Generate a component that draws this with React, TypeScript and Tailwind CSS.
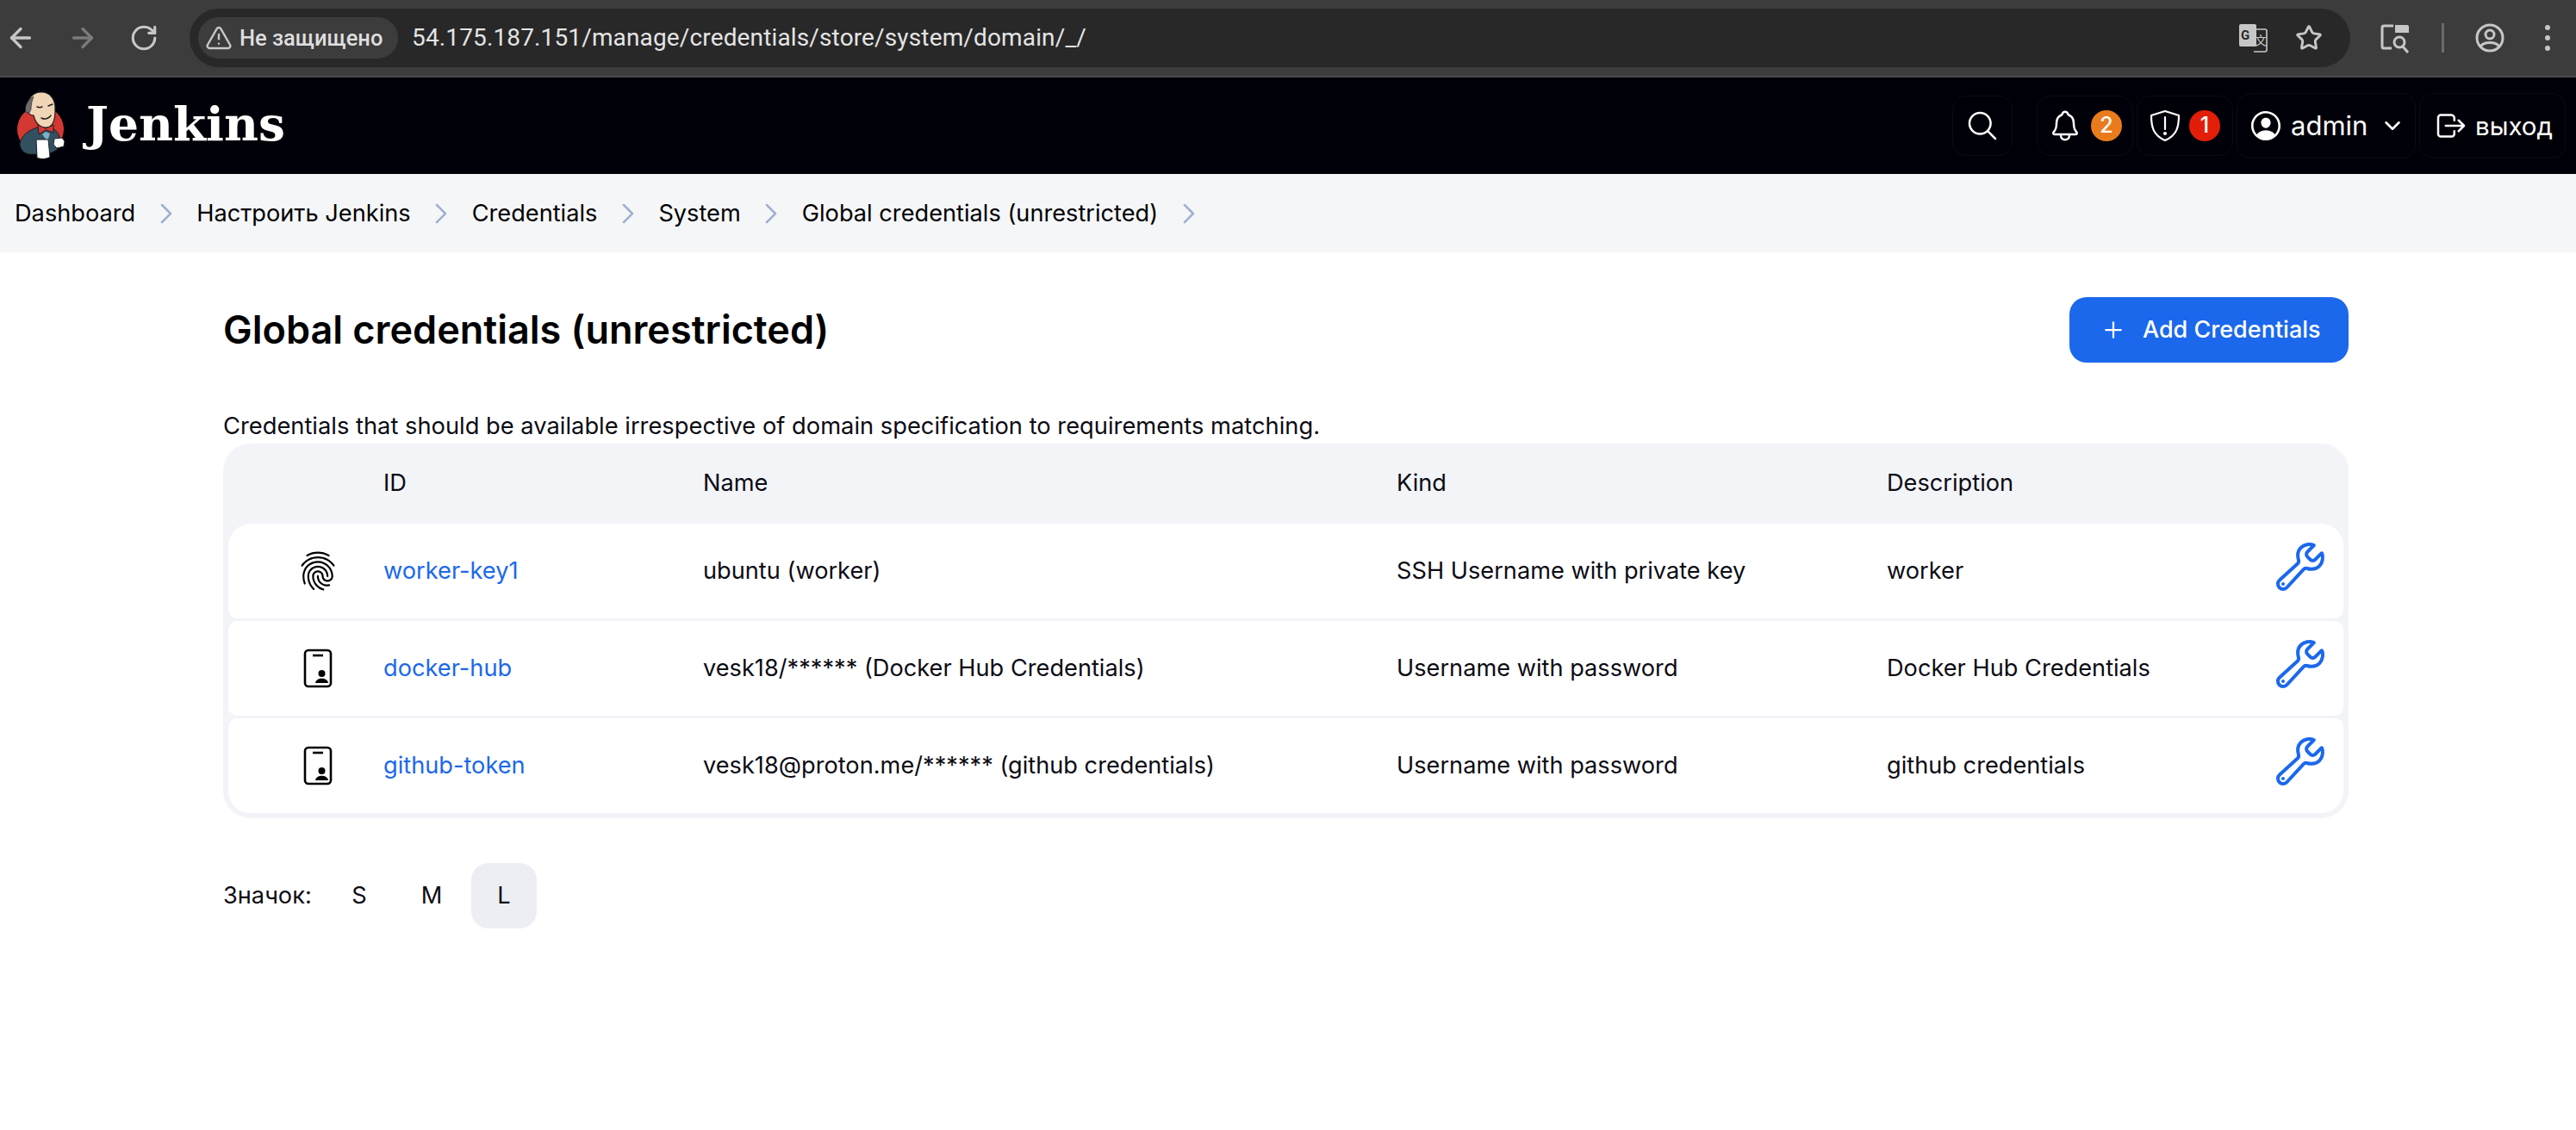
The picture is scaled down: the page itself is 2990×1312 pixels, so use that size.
import React from 'react';
import { ArrowLeft, ArrowRight, RotateCw, TriangleAlert, Star, ChevronRight, ChevronDown, Plus } from 'lucide-react';
import {
  IoSearchOutline,
  IoNotificationsOutline,
  IoPersonCircleOutline,
  IoLogOutOutline,
  IoFingerPrintOutline,
  IoBuildOutline,
} from 'react-icons/io5';

const rowGrid = 'grid grid-cols-[180px_371px_805px_569px_1fr] items-center';

const rows = [
  { id: 'worker-key1', name: 'ubuntu (worker)', kind: 'SSH Username with private key', desc: 'worker', finger: true },
  { id: 'docker-hub', name: 'vesk18/****** (Docker Hub Credentials)', kind: 'Username with password', desc: 'Docker Hub Credentials', finger: false },
  { id: 'github-token', name: 'vesk18@proton.me/****** (github credentials)', kind: 'Username with password', desc: 'github credentials', finger: false },
];

const crumbs = ['Dashboard', 'Настроить Jenkins', 'Credentials', 'System', 'Global credentials (unrestricted)'];

const Mascot = () => (
  <svg width="60" height="80" viewBox="0 0 60 80" className="shrink-0">
    <circle cx="29" cy="44" r="27" fill="#d33833" />
    {/* jacket */}
    <path d="M5 62c1-9 8-16 20-20l16 0c7 3 10 8 10 14l-3 12-10 5H16C10 72 6 68 5 62z" fill="#335061" stroke="#231f20" strokeWidth="1" />
    {/* head */}
    <path d="M14 20C13 9 20 1 30 1c10 0 16 8 16 18 0 8 0 15-4 20-3 4-10 4-14 1-4-3-6-8-7-12-4 0-8-3-7-8z" fill="#f0d6b7" stroke="#231f20" strokeWidth="1.2" />
    <path d="M12 25c-2-8 2-15 9-19-2 5-3 10-3 15l-2 4z" fill="#6d6b6d" stroke="#231f20" strokeWidth="0.6" />
    <path d="M25 18c2 1 4 1 6 0M38 17l5-2M30 31c4 2 8 1 11-3" fill="none" stroke="#231f20" strokeWidth="1.4" strokeLinecap="round" />
    {/* bow tie */}
    <path d="M26 39l9 4 9-4 0 9-9-3-8 5z" fill="#d33833" stroke="#231f20" strokeWidth="1" />
    <path d="M31 50l4-3 5 2-3 9z" fill="#81b0c4" />
    {/* mug and hand */}
    <path d="M24 56l14 0 2 20c-3 3-12 3-15 1z" fill="#ffffff" stroke="#231f20" strokeWidth="1" />
    <path d="M45 55l9-1 3 4-1 6-8 2-4-4z" fill="#ffffff" stroke="#231f20" strokeWidth="1" />
  </svg>
);

const IdCardIcon = () => (
  <svg width="48" height="48" viewBox="0 0 48 48" className="shrink-0">
    <rect x="9" y="3" width="30" height="42" rx="4" fill="none" stroke="#000000" strokeWidth="2.6" />
    <path d="M18 9h12" stroke="#000000" strokeWidth="2.6" />
    <circle cx="28.500" cy="30" r="4" fill="#000000" />
    <path d="M21 41c1-7 14-7 15 0z" fill="#000000" />
  </svg>
);

const TranslateIcon = () => (
  <svg width="34" height="34" viewBox="0 0 34 34" className="shrink-0">
    <rect x="1" y="1" width="20" height="26" rx="2" fill="#c7c7c7" />
    <path d="M12 7h19a2 2 0 0 1 2 2v22a2 2 0 0 1-2 2H18" fill="none" stroke="#c7c7c7" strokeWidth="1.6" />
    <text x="3" y="19" fontSize="15" fontWeight="700" fill="#282828" fontFamily="Roboto, sans-serif">G</text>
    <text x="19" y="25" fontSize="14" fill="#c7c7c7" fontFamily="'Noto Sans CJK SC', sans-serif">文</text>
  </svg>
);

const ReadingIcon = () => (
  <svg width="36" height="36" viewBox="0 0 36 36" className="shrink-0">
    <path d="M16 4H5a2 2 0 0 0-2 2v22a2 2 0 0 0 2 2h9" fill="none" stroke="#c7c7c7" strokeWidth="3" />
    <path d="M18 3h14a2 2 0 0 1 2 2v7H18z" fill="#c7c7c7" />
    <circle cx="23" cy="23" r="6" fill="none" stroke="#c7c7c7" strokeWidth="3" />
    <path d="M27 28l6 7" stroke="#c7c7c7" strokeWidth="3" />
  </svg>
);

const ProfileIcon = () => (
  <svg width="34" height="34" viewBox="0 0 34 34" className="shrink-0" fill="none" stroke="#c7c7c7" strokeWidth="3">
    <circle cx="17" cy="17" r="15" />
    <circle cx="17" cy="13" r="5" />
    <path d="M6 27c4-6 18-6 22 0" />
  </svg>
);

const ShieldIcon = () => (
  <svg width="36" height="38" viewBox="0 0 36 38" fill="none" stroke="#ffffff" strokeWidth="2.2" className="shrink-0">
    <path d="M18 2l16 5c0 13-2 23-16 29C4 30 2 20 2 7z" strokeLinejoin="round" />
    <path d="M18 9v14" strokeLinecap="round" />
    <circle cx="18" cy="28" r="1" fill="#ffffff" />
  </svg>
);

const BrowserBar = () => (
  <div className="h-[90px] bg-[#3c3c3c] border-b-2 border-[#4a4a4a] flex items-center text-[#c7c7c7] font-['Roboto',sans-serif]">
    <div className="w-[220px] flex items-center pl-[6px] gap-[36px] shrink-0">
      <ArrowLeft size={36} strokeWidth={2.2} />
      <ArrowRight size={36} strokeWidth={2.2} className="text-[#7b7b7b]" />
      <RotateCw size={34} strokeWidth={2.2} />
    </div>
    <div className="w-[2508px] h-[68px] rounded-full bg-[#282828] flex items-center pl-[10px] pr-[32px] shrink-0">
      <div className="h-[48px] w-[232px] rounded-full bg-[#3c3c3c] flex items-center pl-[8px] gap-[8px] shrink-0">
        <TriangleAlert size={32} strokeWidth={1.8} />
        <span className="text-[25.500px] font-medium text-[#dedede] whitespace-nowrap">Не защищено</span>
      </div>
      <span className="ml-[16px] text-[28px] tracking-[0.14px] text-[#e4e4e4] whitespace-nowrap">
        54.175.187.151/manage/credentials/store/system/domain/_/
      </span>
      <div className="ml-auto flex items-center gap-[32px]">
        <TranslateIcon />
        <Star size={32} strokeWidth={2.2} />
      </div>
    </div>
    <div className="flex items-center ml-[34px]">
      <ReadingIcon />
      <div className="w-[3px] h-[34px] bg-[#6a6a6a] ml-[36px]" />
      <div className="ml-[36px]">
        <ProfileIcon />
      </div>
      <div className="ml-[47px] flex flex-col gap-[6px]">
        <div className="w-[6px] h-[6px] rounded-full bg-[#c7c7c7]" />
        <div className="w-[6px] h-[6px] rounded-full bg-[#c7c7c7]" />
        <div className="w-[6px] h-[6px] rounded-full bg-[#c7c7c7]" />
      </div>
    </div>
  </div>
);

const Header = () => (
  <header className="h-[112px] bg-[#000008] flex items-center justify-between pl-[18px] pr-[12px] text-white">
    <div className="flex items-center gap-[22px]">
      <Mascot />
      <span className="font-['DejaVu_Serif',serif] font-bold text-[55px] leading-none -mt-[6px]">Jenkins</span>
    </div>
    <div className="flex items-center gap-[4px]">
      <div className="w-[70px] h-[70px] mr-[24px] rounded-[16px] border border-[#0b0b16] flex items-center justify-center">
        <IoSearchOutline size={40} />
      </div>
      <div className="w-[112px] h-[70px] rounded-[16px] border border-[#0b0b16] flex items-center justify-center gap-[10px]">
        <IoNotificationsOutline size={40} />
        <span className="w-[36px] h-[36px] rounded-full bg-[#ea7b1c] flex items-center justify-center text-[25px] font-medium">2</span>
      </div>
      <div className="w-[112px] h-[70px] rounded-[16px] border border-[#0b0b16] flex items-center justify-center gap-[10px]">
        <ShieldIcon />
        <span className="w-[36px] h-[36px] rounded-full bg-[#e31e08] flex items-center justify-center text-[25px] font-medium">1</span>
      </div>
      <div className="w-[208px] h-[76px] rounded-[16px] border border-[#0b0b16] flex items-center pl-[12px]">
        <IoPersonCircleOutline size={42} />
        <span className="ml-[8px] text-[31px]">admin</span>
        <ChevronDown size={30} strokeWidth={2} className="ml-[14px]" />
      </div>
      <div className="w-[170px] h-[76px] rounded-[16px] border border-[#0b0b16] flex items-center pl-[16px]">
        <IoLogOutOutline size={40} />
        <span className="ml-[8px] text-[29.500px]">выход</span>
      </div>
    </div>
  </header>
);

const Breadcrumbs = () => (
  <nav className="h-[91px] bg-[#f5f6f8] flex items-center pl-[17px] pt-[1px] text-[27.200px] text-black">
    {crumbs.map((c) => (
      <React.Fragment key={c}>
        <span className="whitespace-nowrap">{c}</span>
        <ChevronRight size={40} strokeWidth={1.5} className="text-[#9fb0d0] mx-[15.500px]" />
      </React.Fragment>
    ))}
  </nav>
);

const SizeButton = ({ label, active }: { label: string; active?: boolean }) => (
  <div className={`w-[76px] h-[76px] rounded-[20px] flex items-center justify-center ${active ? 'bg-[#eceef4]' : ''}`}>{label}</div>
);

export default function App() {
  return (
    <div className="w-[2990px] h-[1312px] overflow-hidden bg-white font-['Inter',sans-serif] text-[#0c0c14]">
      <BrowserBar />
      <Header />
      <Breadcrumbs />
      <main className="pl-[259px] pr-[264px]">
        <div className="flex items-center justify-between mt-[52px]">
          <h1 className="text-[45px] font-semibold text-black">Global credentials (unrestricted)</h1>
          <button className="w-[324px] h-[76px] rounded-[20px] bg-[#1b68ec] text-white text-[27px] font-medium flex items-center pl-[36px] gap-[19px]">
            <Plus size={30} strokeWidth={1.8} />
            Add Credentials
          </button>
        </div>
        <p className="mt-[55px] text-[27.300px] leading-[38px]">
          Credentials that should be available irrespective of domain specification to requirements matching.
        </p>
        {/* table */}
        <div className="mt-[1px] rounded-[32px] bg-[#f3f4f8] p-[6px] pt-0 text-[27.200px]">
          <div className={`${rowGrid} h-[93px]`}>
            <div />
            <div>ID</div>
            <div>Name</div>
            <div>Kind</div>
            <div>Description</div>
          </div>
          <div className="flex flex-col gap-[3px]">
            {rows.map((r, i) => (
              <div
                key={r.id}
                className={`${rowGrid} h-[110px] bg-white ${i === 0 ? 'rounded-t-[26px] rounded-b-[10px]' : i === 2 ? 'rounded-b-[26px] rounded-t-[10px]' : 'rounded-[10px]'}`}
              >
                <div className="pl-[28px] flex justify-center text-black">
                  {r.finger ? <IoFingerPrintOutline size={48} /> : <IdCardIcon />}
                </div>
                <a className="text-[#1b68ec]">{r.id}</a>
                <div>{r.name}</div>
                <div>{r.kind}</div>
                <div className="flex items-center justify-between pr-[18px]">
                  <span>{r.desc}</span>
                  <IoBuildOutline size={64} className="text-[#1b68ec] -mt-[10px]" />
                </div>
              </div>
            ))}
          </div>
        </div>
        <div className="mt-[52px] flex items-center text-[27.200px]">
          <span className="w-[120px]">Значок:</span>
          <div className="flex gap-[8px]">
            <SizeButton label="S" />
            <SizeButton label="M" />
            <SizeButton label="L" active />
          </div>
        </div>
      </main>
    </div>
  );
}
